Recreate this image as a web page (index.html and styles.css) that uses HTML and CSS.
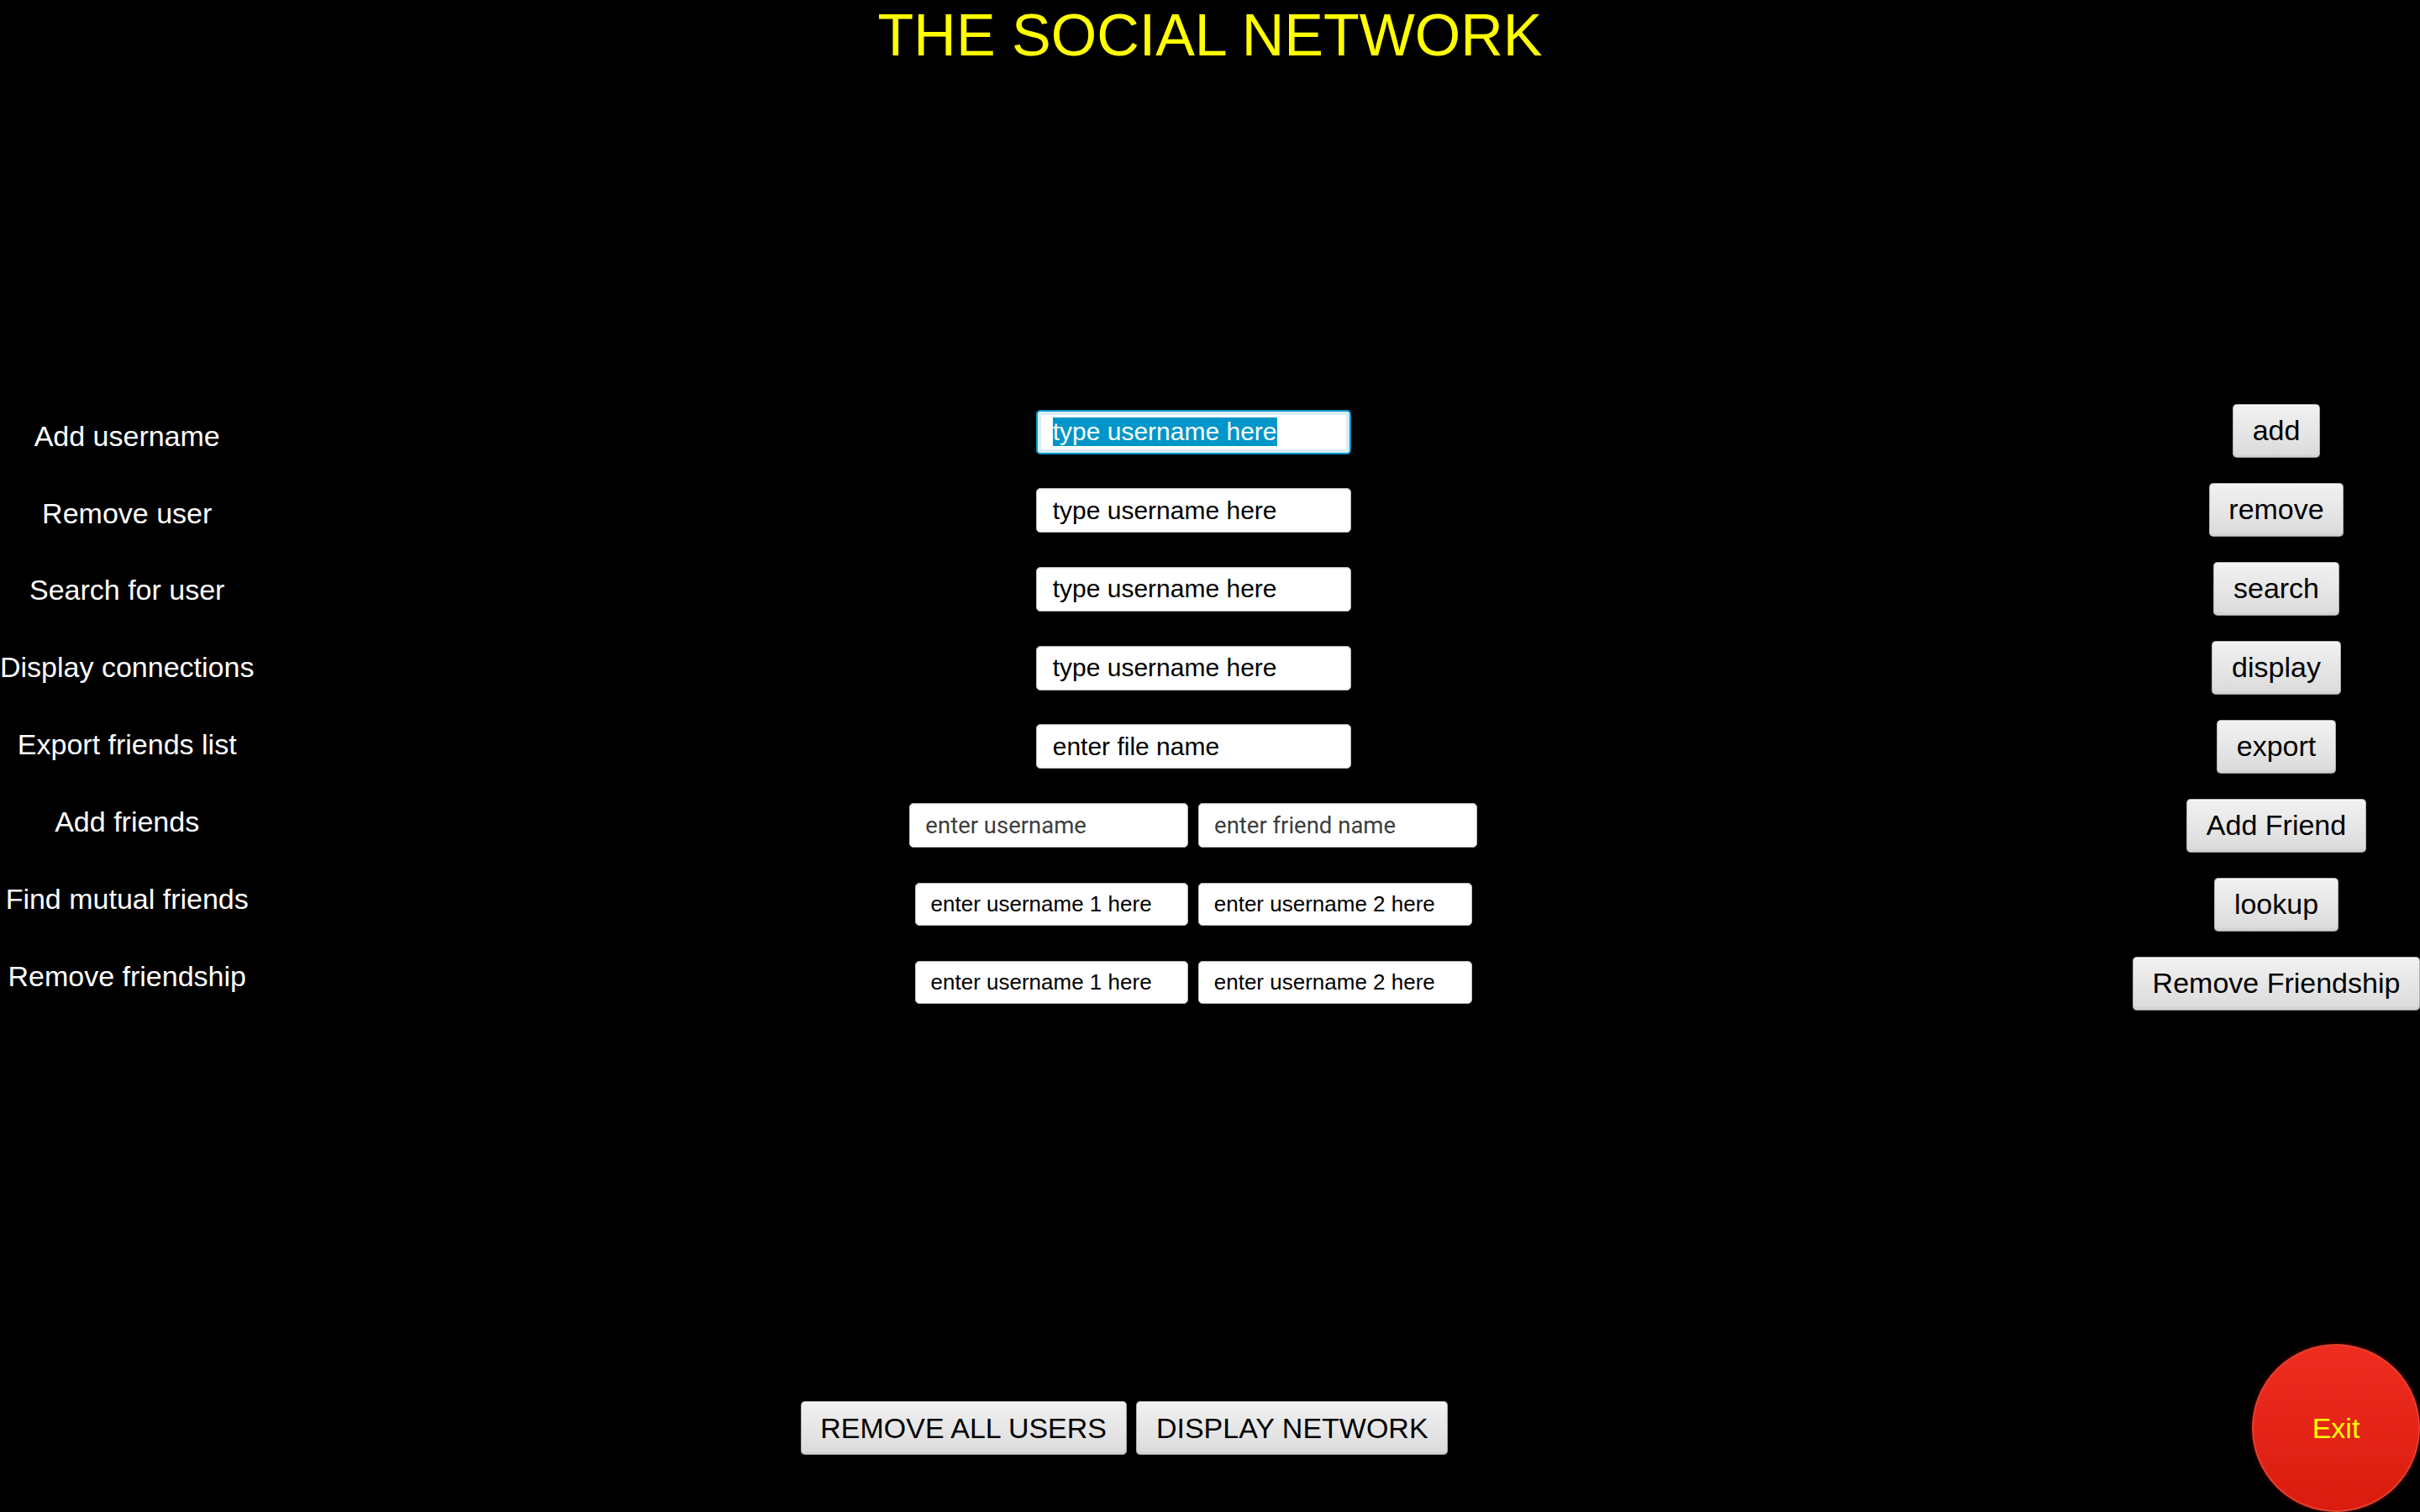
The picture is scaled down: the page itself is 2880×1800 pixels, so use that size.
FILE: index.html
```html
<!DOCTYPE html>
<html lang="en">
<head>
<meta charset="utf-8">
<title>The Social Network</title>
<link rel="stylesheet" href="styles.css">
</head>
<body>
<div class="app">
  <h1 class="title">THE SOCIAL NETWORK</h1>
  <div class="main">
    <div class="labels">
      <div class="label">Add username</div>
      <div class="label">Remove user</div>
      <div class="label">Search for user</div>
      <div class="label">Display connections</div>
      <div class="label">Export friends list</div>
      <div class="label">Add friends</div>
      <div class="label">Find mutual friends</div>
      <div class="label">Remove friendship</div>
    </div>
    <div class="fields">
      <div class="row"><div class="field focused"><span class="sel">type username here</span></div></div>
      <div class="row"><input class="field" value="type username here"></div>
      <div class="row"><input class="field" value="type username here"></div>
      <div class="row"><input class="field" value="type username here"></div>
      <div class="row"><input class="field" value="enter file name"></div>
      <div class="row"><input class="field half" placeholder="enter username"><input class="field half" placeholder="enter friend name"></div>
      <div class="row"><input class="field pair" value="enter username 1 here"><input class="field pair" value="enter username 2 here"></div>
      <div class="row"><input class="field pair" value="enter username 1 here"><input class="field pair" value="enter username 2 here"></div>
    </div>
    <div class="actions">
      <button class="btn">add</button>
      <button class="btn">remove</button>
      <button class="btn">search</button>
      <button class="btn">display</button>
      <button class="btn">export</button>
      <button class="btn">Add Friend</button>
      <button class="btn">lookup</button>
      <button class="btn">Remove Friendship</button>
    </div>
  </div>
  <div class="bottom">
    <div class="bottom-group">
      <button class="btn">REMOVE ALL USERS</button>
      <button class="btn">DISPLAY NETWORK</button>
    </div>
    <button class="exit">Exit</button>
  </div>
</div>
</body>
</html>
```
FILE: styles.css
```css
html, body {
  margin: 0;
  background: #000;
}
body {
  width: 2880px;
  height: 1800px;
  overflow: hidden;
  font-family: "Liberation Sans", Arial, sans-serif;
}
.app {
  height: 1800px;
  display: flex;
  flex-direction: column;
}
.title {
  margin: 0;
  padding-top: 2px;
  height: 80px;
  line-height: 80px;
  font-size: 70px;
  font-weight: normal;
  color: #ffff00;
  text-align: center;
}
.main {
  display: grid;
  grid-template-columns: auto 1fr auto;
}
.labels {
  display: flex;
  flex-direction: column;
  gap: 52.9px;
  padding-top: 417.7px;
}
.label {
  color: #fff;
  font-size: 34px;
  line-height: 39px;
  text-align: center;
  white-space: nowrap;
}
.fields {
  display: flex;
  flex-direction: column;
  gap: 40.7px;
  padding-top: 405.5px;
}
.row {
  height: 53px;
  display: flex;
  justify-content: center;
  align-items: center;
  gap: 11.7px;
}
.field {
  box-sizing: border-box;
  width: 375px;
  height: 53px;
  margin: 0;
  background: #fff;
  border: 1px solid #bcbcbc;
  border-radius: 5px;
  padding: 0 0 0 19px;
  font-family: "Liberation Sans", Arial, sans-serif;
  font-size: 30px;
  color: #000;
  outline: none;
  box-shadow: inset 0 1px 1px rgba(0, 0, 0, 0.06);
}
.field.focused {
  display: flex;
  align-items: center;
  border: 2px solid #0795c7;
  padding-left: 18px;
  box-shadow: inset 0 0 0 4px #d6edf7;
}
.sel {
  background: #0096c9;
  color: #fff;
  white-space: nowrap;
}
.field.half {
  width: 332px;
  padding-left: 18px;
  font-family: Roboto, "Liberation Sans", sans-serif;
  font-size: 27.5px;
}
.field.half::placeholder {
  color: #3e3e3e;
  opacity: 1;
}
.field.pair {
  width: 325.5px;
  height: 51px;
  padding-left: 17.7px;
  font-size: 26px;
}
.actions {
  display: flex;
  flex-direction: column;
  align-items: center;
  gap: 30px;
  padding-top: 398.7px;
}
.btn {
  box-sizing: border-box;
  height: 64px;
  margin: 0;
  padding: 0 22.6px;
  font-family: "Liberation Sans", Arial, sans-serif;
  font-size: 34px;
  color: #000;
  white-space: nowrap;
  background: linear-gradient(#f1f1f1, #e4e4e4 60%, #dadada);
  border: 1px solid #acacac;
  border-bottom-color: #9c9c9c;
  border-radius: 5px;
  box-shadow: inset 0 1px 0 #fbfbfb, inset 0 -3px 0 #d3d3d3;
}
.bottom {
  margin-top: auto;
  height: 200px;
  display: flex;
  align-items: center;
  padding-left: 952.7px;
}
.bottom-group {
  display: flex;
  gap: 11.7px;
}
.exit {
  margin-left: auto;
  box-sizing: border-box;
  width: 200px;
  height: 200px;
  padding: 0;
  border-radius: 50%;
  background: linear-gradient(#ef2c20, #d91c0e);
  border: 2px solid #e5402f;
  box-shadow: 0 0 5px rgba(110, 0, 0, 0.9);
  color: #ffff00;
  font-family: "Liberation Sans", Arial, sans-serif;
  font-size: 34px;
}
```
